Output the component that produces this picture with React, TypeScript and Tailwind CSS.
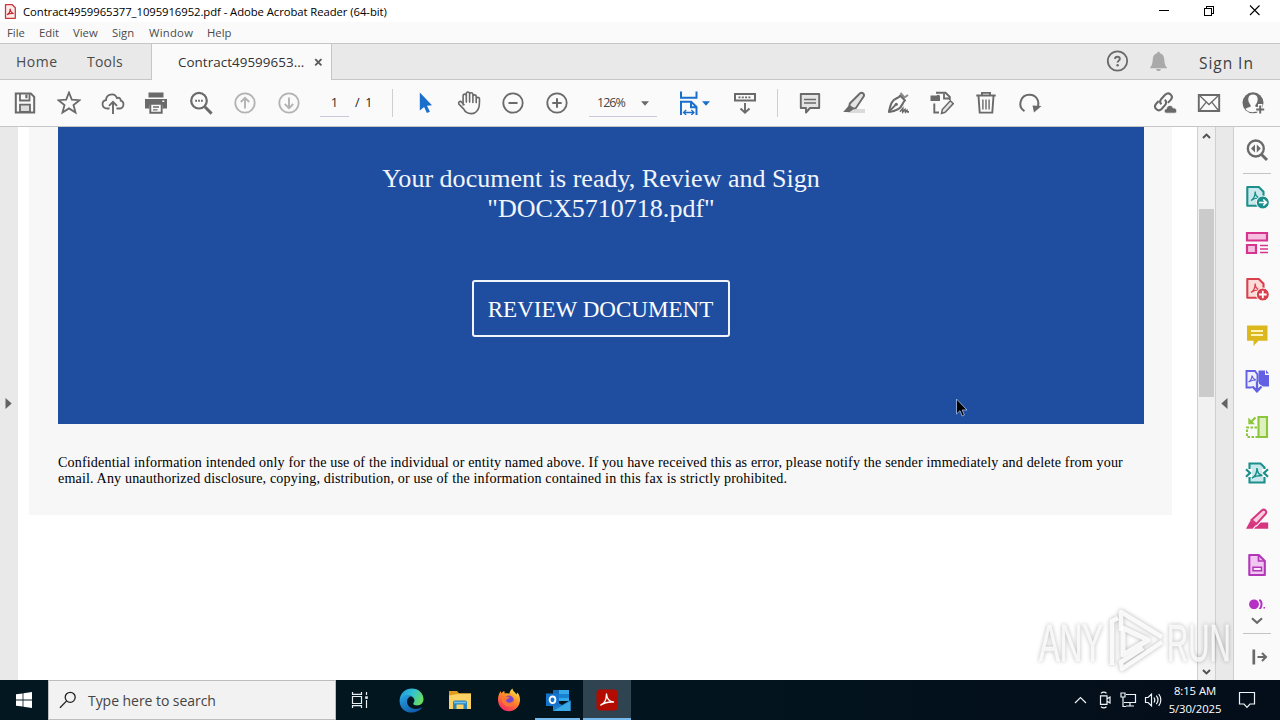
import React from "react";

type IconProps = {
  children: React.ReactNode;
  size?: number;
  color?: string;
  sw?: number;
};

function Icon({ children, size = 24, color = "#6a6a6a", sw = 1.8 }: IconProps) {
  return (
    <svg
      width={size}
      height={size}
      viewBox={`0 0 ${size} ${size}`}
      fill="none"
      stroke={color}
      strokeWidth={sw}
      className="block shrink-0"
    >
      {children}
    </svg>
  );
}

function Cell({ children }: { children: React.ReactNode }) {
  return <div className="flex w-11 shrink-0 items-center justify-center">{children}</div>;
}

const ui = "font-['Open_Sans','Noto_Sans',sans-serif]";
const serif = "font-['Liberation_Serif',serif]";

function TitleBar() {
  return (
    <div className="flex h-[22px] items-center bg-white">
      <div className="ml-1 w-[19px]">
        <svg width="12" height="15" viewBox="0 0 12 15" className="block">
          <path d="M1.500.7h6.800l3 3v10.600H1.500z" fill="#fdeceb" stroke="#c9373c" strokeWidth="1.300" strokeLinejoin="round" />
          <path d="M3 10.800c2-1 3.200-3.300 3.200-6 .2 3 1.300 4.300 3.500 4.700-2.400-.3-4.700 0-6.700 1.300z" fill="none" stroke="#c9242b" strokeWidth="1.200" />
        </svg>
      </div>
      <span className="pt-px text-[11.3px] leading-[22px] tracking-[-0.065px] text-black">
        Contract4959965377_1095916952.pdf - Adobe Acrobat Reader (64-bit)
      </span>
      <div className="ml-auto flex items-center pr-[5px]">
        <svg width="116" height="22" viewBox="0 0 116 22" fill="none" stroke="#000" className="block" shapeRendering="crispEdges">
          <path d="M0 10.500h10" />
          <path d="M45.500 8.500h7v7h-7zM47.500 8v-1.500h7v7H53" />
          <path d="M91 5.500l9.500 9.500M100.500 5.500L91 15" shapeRendering="auto" strokeWidth="1.100" />
        </svg>
      </div>
    </div>
  );
}

function MenuBar() {
  return (
    <div className="flex h-[21px] items-center bg-[#fafafa] text-[11.3px] leading-[21px] text-[#4b4b4b]">
      <span className="ml-[7px] w-8">File</span>
      <span className="w-[34px]">Edit</span>
      <span className="w-[39px]">View</span>
      <span className="w-[37px]">Sign</span>
      <span className="w-[58px] tracking-[0.25px]">Window</span>
      <span>Help</span>
    </div>
  );
}

function TabBar() {
  return (
    <div className="flex h-[37px] items-stretch border-y border-[#c6c6c6] bg-[#e9e9e9] text-[#4b4b4b]">
      <div className="flex w-[151px] items-center text-[14px] tracking-[0.500px]">
        <span className="ml-4 w-[71px]">Home</span>
        <span className="tracking-[0.200px]">Tools</span>
      </div>
      <div className="-mb-px flex w-[181px] items-center border-x border-[#c6c6c6] bg-[#fafafa]">
        <span className="ml-[26px] w-[136px] text-[13.400px] tracking-[0.050px] text-[#333]">Contract49599653...</span>
        <svg width="9" height="9" viewBox="0 0 9 9" className="block">
          <path d="M1.200 1.200l6.200 6.200M7.400 1.200L1.200 7.400" stroke="#5c5c5c" strokeWidth="1.900" />
        </svg>
      </div>
      <div className="ml-auto flex items-center pb-px">
        <Icon>
          <circle cx="12.500" cy="12" r="9.700" strokeWidth="1.800" />
          <path d="M10.100 9.900c0-2.900 4.700-2.900 4.700 0 0 1.700-2.200 1.800-2.200 3.700" strokeWidth="1.900" />
          <circle cx="12.600" cy="16.300" r="1.200" fill="#6a6a6a" stroke="none" />
        </Icon>
        <div className="ml-[17px]">
          <Icon>
            <g fill="#a9a9a9" stroke="none" transform="translate(.5 0)">
              <path d="M12 2.800c1 0 1.400.7 1.400 1.500 2.800.7 4.100 3 4.300 5.700.3 4.200.7 6.600 2.700 8.500v.8H3.600v-.8c2-1.900 2.400-4.300 2.700-8.500.2-2.700 1.500-5 4.300-5.700 0-.8.4-1.500 1.400-1.500z" />
              <path d="M9.500 20h5c-.4 1.500-1.300 2-2.500 2s-2.100-.5-2.500-2z" />
            </g>
          </Icon>
        </div>
        <span className="ml-[29px] w-[81px] pt-[3px] text-[15.500px] leading-5 tracking-[0.950px] text-[#3f3f3f]">Sign In</span>
      </div>
    </div>
  );
}

function Caret({ color = "#6a6a6a" }: { color?: string }) {
  return (
    <svg width="8" height="5" viewBox="0 0 8 5" className="block shrink-0">
      <path d="M0 .3h8L4 4.800z" fill={color} />
    </svg>
  );
}

function Toolbar() {
  return (
    <div className="flex h-[47px] items-center border-b border-[#c6c6c6] bg-[#fafafa] pl-[3px]">
      <Cell>
        <Icon>
          <path d="M2.800 2.500h15l3.400 3.300v15.700H2.800z" strokeWidth="2" />
          <path d="M7 2.500v7h9.500v-7" />
          <path d="M12.300 3.500h2.200v3.700h-2.200z" fill="#6a6a6a" stroke="none" />
          <path d="M7 21v-7.300h10V21z" fill="#dcdcdc" />
        </Icon>
      </Cell>
      <Cell>
        <Icon>
          <path d="M12 1.500l2.800 7.200 7.700.5-6 4.800 2 7.600-6.500-4.200L5.500 21.600l2-7.600-6-4.800 7.700-.5z" />
        </Icon>
      </Cell>
      <Cell>
        <Icon>
          <path d="M8.500 17.500H6.300c-6-.2-6.200-7.600-1.200-8.400C5 3.200 13.500 1 16 7.100c2.200-1.100 4 .7 3.700 2.500 4.300 1.500 3.300 7.900-1.300 7.900h-2.900" />
          <path d="M12 23V11.500M8 14.800l4-4 4 4" strokeWidth="1.900" />
        </Icon>
      </Cell>
      <Cell>
        <Icon>
          <g transform="translate(-1 0)">
            <path d="M1 8h22v9.500h-4.500V13.500h-13v4H1z" fill="#6a6a6a" stroke="none" />
            <path d="M4.500 1.500h15V6.500h-15z" fill="#6a6a6a" stroke="none" />
            <path d="M6.300 12.800h11.400v9H6.300z" fill="#fafafa" strokeWidth="1.900" />
            <path d="M9 16h6M9 18.800h4.500" strokeWidth="1.300" />
            <path d="M18.300 9.500h2v1.500h-2z" fill="#fafafa" stroke="none" />
          </g>
        </Icon>
      </Cell>
      <Cell>
        <Icon>
          <circle cx="10" cy="9.700" r="7.800" strokeWidth="2.200" />
          <path d="M15.800 15.800l6.800 6.800" strokeWidth="3" />
          <path d="M6.200 9.700h1.800M9.100 9.700h1.800M12 9.700h1.800" strokeWidth="2" />
        </Icon>
      </Cell>
      <Cell>
        <Icon color="#b3b3b3">
          <circle cx="12" cy="12" r="9.700" />
          <path d="M12 17.500V7M7.800 11L12 6.800l4.200 4.200" strokeWidth="1.900" />
        </Icon>
      </Cell>
      <Cell>
        <Icon color="#b3b3b3">
          <circle cx="12" cy="12" r="9.700" />
          <path d="M12 6.500V17M7.800 13l4.200 4.200 4.200-4.200" strokeWidth="1.900" />
        </Icon>
      </Cell>
      <div className="ml-[9px] mt-[1px] flex h-[27px] w-[29px] items-center justify-center border-b border-[#c9c9de] text-[13px] text-[#333]">1</div>
      <span className="ml-1.5 w-[37px] text-[12.500px] tracking-[-0.300px] text-[#222]">/&nbsp; 1</span>
      <div className="h-7 w-px bg-[#cfcfcf]" />
      <div className="w-[10px]" />
      <Cell>
        <Icon>
          <path d="M6.800 1.500L19 14.200l-5 .6 2.900 6-3 1.300-2.800-6-4.300 3.300z" fill="#1a6fcc" stroke="none" />
        </Icon>
      </Cell>
      <Cell>
        <Icon>
          <path
            d="M5.900 14.800V5.300c0-2.400 3.200-2.400 3.200 0v6.200V3.300c0-2.500 3.300-2.500 3.300 0v8.200V3.900c0-2.400 3.300-2.400 3.300 0v8V6c0-2.300 3.300-2.300 3.300 0v6V8.500c0-2.300 3.300-2.300 3.300 0 0 4 .1 7.200-1.100 9.500-1.500 3.500-4.100 5-7.300 5-4 0-6-1.600-7.500-4.700L1.700 13.500c-1-2 1.300-3.600 2.800-1.900l2.700 3.100"
            transform="translate(.2 -.4)"
            strokeLinejoin="round"
            strokeWidth="1.600"
          />
        </Icon>
      </Cell>
      <Cell>
        <Icon>
          <circle cx="12" cy="12" r="9.700" />
          <path d="M7.500 12h9" strokeWidth="2" />
        </Icon>
      </Cell>
      <Cell>
        <Icon>
          <circle cx="12" cy="12" r="9.700" />
          <path d="M7.300 12h9.400M12 7.300v9.400" strokeWidth="2" />
        </Icon>
      </Cell>
      <div className="ml-[10px] mt-[1px] flex h-[27px] w-[68px] items-center border-b border-[#c9c9de]">
        <span className="ml-2 w-11 text-[12.500px] tracking-[-1px] text-[#444]">126%</span>
        <Caret />
      </div>
      <div className="ml-[22px] flex items-center gap-px">
        <Icon color="#1a6fcc">
          <path d="M2 .5v6.300h15.500V.5" strokeWidth="2" />
          <path d="M2 24V10.800h10.200l5.300 5.200V24M12 11v5.200h5" strokeWidth="2" />
          <path d="M5 21.500h9.500M7.200 19L4.500 21.500 7.200 24M12.300 19l2.700 2.500-2.700 2.500" strokeWidth="1.300" />
        </Icon>
        <div className="-ml-[2px]">
          <Caret color="#1a6fcc" />
        </div>
      </div>
      <div className="ml-[23px] w-11">
        <Icon>
          <path d="M2 3h20v6.500H2z" strokeWidth="2" />
          <path d="M5.500 6.300h2M8.800 6.300h2M12.100 6.300h2M15.400 6.300h2" strokeWidth="1.800" />
          <path d="M12 12v9.500M7.500 17.500l4.500 4.300 4.500-4.300" strokeWidth="1.900" />
        </Icon>
      </div>
      <div className="h-7 w-px bg-[#cfcfcf]" />
      <div className="w-[10px]" />
      <Cell>
        <Icon>
          <path d="M2.800 3h18.400v14H12l-4 4.500V17H2.800z" fill="#e4e4e4" strokeLinejoin="round" strokeWidth="1.900" />
          <path d="M6 8.500h12M6 12h12" strokeWidth="1.500" />
        </Icon>
      </Cell>
      <Cell>
        <Icon>
          <path d="M9 18h14v4H5z" fill="#dadada" stroke="none" />
          <path d="M7.800 12.500l10-10c2.500-2 5.500.8 3.500 3.500l-7.500 11.200-3.300.3-3.200-2.300z" fill="#e4e4e4" strokeWidth="1.900" />
          <path d="M7.500 13.800l4.800 3.700-4.600 3.600H1.200z" fill="#6a6a6a" stroke="none" />
        </Icon>
      </Cell>
      <Cell>
        <Icon>
          <path d="M14.500 2l4 4.500 3.500-2.500" strokeWidth="1.900" stroke="#8a8a8a" />
          <path d="M14.200 4.500c-.5 1.500-1.500 2-3.500 2.800-4.500 2-6 4.700-7.700 13.700 7.500-1 11.500-3.300 13.300-7.500.7-1.700 1.200-3 2.700-4z" strokeWidth="2.100" strokeLinejoin="round" />
          <path d="M3 20.700l6.500-6.700" />
          <circle cx="10.300" cy="13.300" r="1.600" fill="#6a6a6a" stroke="none" />
          <path d="M14 20.700l2.800-3.200v3.500l2.200-2.500.5 2.500 1.500-1.600.5 1.500H23" strokeWidth="1.600" />
        </Icon>
      </Cell>
      <Cell>
        <Icon>
          <path d="M6 1.800h9.500l4.300 4.200v3M4.300 12.500v9H9" strokeWidth="1.900" />
          <path d="M.5 4.500h6c2-1.300 3.500-.5 3.500 1.500v4H.5z" fill="#6a6a6a" stroke="none" />
          <path d="M14 2.500v5h5.500" />
          <path d="M11.500 22.500l.8-4 8-8.700 3 2.800-8.200 8.700z" fill="#e4e4e4" strokeWidth="1.500" />
        </Icon>
      </Cell>
      <Cell>
        <Icon>
          <path d="M2.300 4.500h19.400M8 4.300V1.900h8v2.400" strokeWidth="1.900" />
          <path d="M4.500 5l1.200 16.600h12.600L19.500 5" strokeWidth="1.900" />
          <path d="M8.900 8.500v10M12 8.500v10M15.100 8.500v10" strokeWidth="1.400" />
        </Icon>
      </Cell>
      <Cell>
        <Icon>
          <path d="M6.500 20.200C-1 15.500 2.500 3.700 11.300 3.700c8 0 11 7.800 7.700 14" strokeWidth="2" />
          <path d="M23.500 15l-7.500 6.500-1.500-7z" fill="#6a6a6a" stroke="none" />
        </Icon>
      </Cell>
      <div className="ml-auto flex pr-[5px]">
        <Cell>
          <Icon>
            <g transform="translate(-.5 0)" strokeWidth="2.100">
              <path d="M9 13.200c-1.800-1.600-1.700-3.500-.2-5.200l3.800-4.300c3.900-3.600 9 1.200 5.600 5.200l-2.800 3" />
              <path d="M12.300 8.800c1.800 1.600 1.700 3.700.2 5.300l-3.400 3.800C5.400 21.500.3 16.600 3.700 12.700L6.200 10" />
            </g>
            <path d="M13.500 22.200c-3-.2-3-4.200 0-4.500.4-4 5.800-4.200 6.500-.8 4 -.6 5 5 1.800 5.300z" fill="#6a6a6a" stroke="#fafafa" strokeWidth="0.800" />
          </Icon>
        </Cell>
        <Cell>
          <Icon>
            <path d="M1.800 4h20.400v16H1.800z" strokeWidth="1.900" />
            <path d="M2.500 4.500l9.500 9 9.500-9M2.500 19.500l6.700-8.300M21.500 19.500l-6.700-8.300" strokeWidth="1.300" />
          </Icon>
        </Cell>
        <Cell>
          <Icon>
            <circle cx="12" cy="11.800" r="10.500" fill="#6a6a6a" stroke="none" />
            <path d="M12 3.500c-4.700 0-5.500 4.500-4 8 .6 1.500 2 2.400 1.800 4-1 .8-4 1-5.300 2.500 3.300 4.300 10 4.300 13 .5v-2c-1-.5-3-.5-3.300-1.300-.2-1.300 1.200-2.200 1.800-3.700 1.500-3.500.7-8-4-8z" fill="#fafafa" stroke="none" />
            <path d="M19.200 13v10M14.500 18.500h10" stroke="#fafafa" strokeWidth="4.500" />
            <path d="M19.200 14.500v8M15.200 18.500h8" strokeWidth="2" />
          </Icon>
        </Cell>
      </div>
    </div>
  );
}

function Triangle({ dir }: { dir: "left" | "right" }) {
  return (
    <svg width="7" height="11" viewBox="0 0 7 11" className="mr-px block">
      <path d={dir === "left" ? "M6.500 0v11L.3 5.500z" : "M.5 0v11l6.200-5.500z"} fill="#636363" />
    </svg>
  );
}

function DocumentView() {
  return (
    <div className={`flex w-[1179px] flex-col bg-white pl-[11px] ${serif}`}>
      <div className="h-[388px] w-[1143px] bg-[#f7f7f7] pl-[29px] pr-7">
        <div className="flex h-[297px] flex-col items-center bg-[#1f4ea1] text-[#f1f5fb]">
          <p className="mt-[37px] text-center text-[26.050px] leading-[30px]">
            Your document is ready, Review and Sign
            <br />
            "DOCX5710718.pdf"
          </p>
          <div className="mt-14 flex h-[57px] w-[258px] justify-center rounded-[3px] border-2 border-[#f1f5fb] pr-px pt-[13px] text-[23.050px] leading-[28px] text-white">
            REVIEW DOCUMENT
          </div>
        </div>
        <p className="mt-[30px] whitespace-nowrap text-[14.100px] leading-4 tracking-[0.147px] text-black">
          Confidential information intended only for the use of the individual or entity named above. If you have received this as error, please notify the sender immediately and delete from your
          <br />
          email. Any unauthorized disclosure, copying, distribution, or use of the information contained in this fax is strictly prohibited.
        </p>
      </div>
    </div>
  );
}

function Scrollbar() {
  return (
    <div className="flex w-[19px] flex-col items-center border-x border-[#cfcfcf] bg-[#f1f1f1]">
      <svg width="9" height="6" viewBox="0 0 9 6" className="mt-[6px] block shrink-0">
        <path d="M1 5l3.500-3.500L8 5" fill="none" stroke="#505050" strokeWidth="1.900" />
      </svg>
      <div className="mt-[70px] h-[188px] w-[15px] shrink-0 bg-[#cbcbcb]" />
      <svg width="9" height="6" viewBox="0 0 9 6" className="mb-[5px] mt-auto block shrink-0">
        <path d="M1 1l3.500 3.500L8 1" fill="none" stroke="#505050" strokeWidth="1.900" />
      </svg>
    </div>
  );
}

function ToolCell({ children }: { children: React.ReactNode }) {
  return <div className="flex h-[46px] shrink-0 items-center justify-center">{children}</div>;
}

const acro = "M6 15.500c2.700-1.500 4.200-4.800 4.200-9 0 3.500 2 6 5 6.500-3.400-.2-6.500.5-9.200 2.500z";

function ToolsPane() {
  return (
    <div className="flex w-[47px] flex-col border-l border-[#cfcfcf] bg-[#fafafa]">
      <div className="flex h-[46px] shrink-0 items-center justify-center">
        <Icon>
          <circle cx="10.800" cy="10.500" r="8" strokeWidth="2.300" />
          <path d="M16.500 16.500l5.500 5.500" strokeWidth="3" />
          <path d="M10 6.500v8L6 10.500zM11.800 6.500v8l4-4z" fill="#6a6a6a" stroke="none" />
        </Icon>
      </div>
      <div className="mx-auto h-px w-7 shrink-0 bg-[#c4c4c4]" />
      <ToolCell>
        <Icon color="#1b8f8b">
          <path d="M2.300 2h11.500l4.700 4.700v14H2.300z" fill="#cbe9ec" strokeWidth="2.100" strokeLinejoin="round" />
          <path d={acro} strokeWidth="1.300" />
          <circle cx="17.800" cy="17.500" r="6.500" fill="#1b8f8b" stroke="#fafafa" strokeWidth="1" />
          <path d="M14 17.500h7M18.300 14.500l3 3-3 3" stroke="#fff" strokeWidth="1.700" />
        </Icon>
      </ToolCell>
      <ToolCell>
        <Icon color="#d6358f">
          <path d="M2 2h20v7.500H2zM2 14h9v8H2z" fill="#f6bfe0" strokeWidth="2.200" />
          <path d="M15 14.500h8M15 18h8M15 21.500h8" strokeWidth="1.300" />
        </Icon>
      </ToolCell>
      <ToolCell>
        <Icon color="#d9404d">
          <path d="M2.300 2h11.500l4.700 4.700v14H2.300z" fill="#fbdcd8" strokeWidth="2.100" strokeLinejoin="round" />
          <path d={acro} strokeWidth="1.300" />
          <circle cx="17.800" cy="17.500" r="6.500" fill="#d9404d" stroke="#fafafa" strokeWidth="1" />
          <path d="M14 17.500h7.600M17.800 13.700v7.600" stroke="#fff" strokeWidth="1.800" />
        </Icon>
      </ToolCell>
      <ToolCell>
        <Icon>
          <path d="M2 2.500h20.500v15.300h-9L8.500 23v-5.200H2z" fill="#dcb81f" stroke="none" />
          <path d="M6 8h12M6 12h12" stroke="#fff3b8" strokeWidth="1.800" />
        </Icon>
      </ToolCell>
      <ToolCell>
        <Icon color="#6360e3">
          <path d="M8 18.500H1.500V2h8.500l2.500 3.500v8" strokeWidth="1.900" fill="#eeeefc" />
          <path d="M3.500 13c2.500-1.500 3.500-3.500 3.500-6.500.5 2.500 2 4 4 4.500-2.500 0-5 .5-7.500 2z" strokeWidth="1.200" />
          <path d="M13.500 1.500H20V6h4v11.500h-6l-4.500-3z" fill="#6360e3" stroke="none" />
          <path d="M21 1l3 3.500h-3z" fill="#6360e3" stroke="none" />
          <path d="M12 13v8M7.800 18l4.200 4.500 4.200-4.500" strokeWidth="4" stroke="#fafafa" />
          <path d="M12 12.500v9M7.500 17.500l4.500 4.800 4.500-4.800" strokeWidth="2.400" />
        </Icon>
      </ToolCell>
      <ToolCell>
        <Icon color="#8cc63c">
          <path d="M13.500 2H22v20h-8.500z" fill="#def0c0" strokeWidth="2.100" />
          <path d="M13 22H2v-9.500h11" strokeWidth="2.100" strokeDasharray="2.500 1.500" />
          <path d="M3.300 2.500v6.700h6.700z" fill="#8cc63c" stroke="none" />
          <path d="M5 8l5.500-5.500" strokeWidth="2.200" />
        </Icon>
      </ToolCell>
      <ToolCell>
        <Icon color="#1b8f8b">
          <path d="M7 5h10v14H7z" fill="#cbe9ec" stroke="none" />
          <path d="M4.500 8V2.500h11L19.500 6.500V8M4.500 16v5.500h15V16" fill="#cbe9ec" strokeWidth="2.100" />
          <path d="M7 17c3-1.500 5-5 5-10 .2 4.500 2.500 7 5.500 7.500-4 0-7.500.5-10.500 2.500z" strokeWidth="1.500" />
          <path d="M1 8.300l4 3.700-4 3.700M23 8.300L19 12l4 3.700" strokeWidth="2.200" />
        </Icon>
      </ToolCell>
      <ToolCell>
        <Icon color="#d6357f">
          <path d="M9 21.800L14.500 15.500h8.700v6.300z" fill="#d6357f" stroke="none" />
          <path d="M6.500 13L17 3.300c2.300-1.800 5.300.7 3.800 3.400L11.500 17z" fill="#f9cfe0" stroke="#fafafa" strokeWidth="4" />
          <path d="M6.500 13L17 3.300c2.300-1.800 5.300.7 3.800 3.400L11.500 17z" fill="#f9cfe0" strokeWidth="2" />
          <path d="M5.500 13.500l6 4-4 4.300H1z" fill="#d6357f" stroke="none" />
        </Icon>
      </ToolCell>
      <ToolCell>
        <Icon color="#b237b8">
          <path d="M4.300 2h9.500l6 6v14H4.300z" fill="#f0c6f3" strokeWidth="2.100" strokeLinejoin="round" />
          <path d="M13.500 2.500V8h6" strokeWidth="1.700" />
          <path d="M8 14.300h8.500v3.500H8z" strokeWidth="1.500" fill="#fbe9fc" />
        </Icon>
      </ToolCell>
      <div className="flex h-[21px] shrink-0 items-end justify-center pb-0">
        <svg width="18" height="10" viewBox="0 0 18 10" className="block">
          <circle cx="6" cy="5.300" r="4.900" fill="#b52fc4" />
          <path d="M11.300.8c3 1.600 3 7.300 0 9.200" fill="none" stroke="#b52fc4" strokeWidth="2" />
          <path d="M15.500 8h1.500v1.500h-1.500z" fill="#b52fc4" />
        </svg>
      </div>
      <div className="flex h-[24px] shrink-0 items-center justify-center">
        <svg width="12" height="8" viewBox="0 0 12 8" className="block">
          <path d="M1 1.300l5 4.500 5-4.500" fill="none" stroke="#6a6a6a" strokeWidth="2.200" />
        </svg>
      </div>
      <div className="mx-auto h-px w-7 shrink-0 bg-[#c4c4c4]" />
      <div className="flex h-[46px] shrink-0 items-center justify-center pl-1.5">
        <svg width="16" height="16" viewBox="0 0 16 16" className="block" fill="none" stroke="#6a6a6a">
          <path d="M1.800.5v15" strokeWidth="2.700" />
          <path d="M5.500 8H14M10 4l4 4-4 4" strokeWidth="2.100" />
        </svg>
      </div>
    </div>
  );
}

function Watermark() {
  return (
    <div className="pointer-events-none absolute left-[1032px] top-[604px] drop-shadow-[0_0_2px_rgba(0,0,0,0.34)]">
      <svg width="240" height="74" viewBox="0 0 240 74" className="block overflow-visible">
        <g fill="#fff" fillOpacity="0.8" stroke="#fff" strokeOpacity="0.5" strokeWidth="0.800" fontFamily="'Liberation Sans', sans-serif" fontSize="52">
          <text transform="translate(7 57) scale(.6 1)" x="0" y="0">ANY</text>
          <text transform="translate(135 57) scale(.565 1)" x="0" y="0">RUN</text>
        </g>
        <g fill="none" stroke="#fff" strokeOpacity="0.88" strokeWidth="4.500" strokeLinejoin="round">
          <path d="M91 24v27l25-15z" strokeWidth="5" />
          <path d="M80 61V17l6-3" />
          <path d="M89 27V8l41 25" />
          <path d="M130 38L90 65l-1-7 22-14" />
        </g>
      </svg>
    </div>
  );
}

function Taskbar() {
  return (
    <div className="flex h-10 items-stretch bg-gradient-to-r from-[#021720] via-[#02151e] to-[#040d1a]">
      <div className="flex w-12 items-center justify-center">
        <svg width="16" height="16" viewBox="0 0 16 16" fill="#fff" className="block">
          <path d="M0 2.300L6.600 1.400v6.200H0zM7.400 1.300L16 0v7.600H7.400zM0 8.400h6.600v6.200L0 13.700zM7.400 8.400H16V16l-8.600-1.300z" />
        </svg>
      </div>
      <div className="flex w-72 items-center border border-[#bdbdbd] bg-[#f2f2f2]">
        <svg width="18" height="18" viewBox="0 0 18 18" className="ml-[10px] block" fill="none" stroke="#222" strokeWidth="1.300">
          <circle cx="11.200" cy="6.300" r="5" />
          <path d="M7.600 9.900L1 16.800" />
        </svg>
        <span className="ml-[11px] text-[14px] tracking-[-0.050px] text-[#444]">Type here to search</span>
      </div>
      <div className="flex w-12 items-center justify-center">
        <svg width="18" height="16" viewBox="0 0 18 16" className="block" fill="none" stroke="#e8eef0" strokeWidth="1.200">
          <path d="M1.500 4.500h9v7h-9zM1.500 0v2.300h9V0M1.500 16v-2.300h9V16M15.500 0v3M15.500 8v8" />
          <path d="M14.200 4.300h2.600v2.600h-2.600z" fill="#e8eef0" stroke="none" />
        </svg>
      </div>
      <div className="flex w-[53px] items-center justify-center pl-px">
        <svg width="25" height="25" viewBox="0 0 25 25" className="block">
          <defs>
            <linearGradient id="edgeTop" x1="0" x2="1" y1="0.200" y2="0.600">
              <stop offset="0" stopColor="#2099dd" />
              <stop offset="0.500" stopColor="#33c3cf" />
              <stop offset="1" stopColor="#6ade5c" />
            </linearGradient>
            <linearGradient id="edgeBottom" x1="0" x2="0.700" y1="0" y2="1">
              <stop offset="0" stopColor="#2aa5e4" />
              <stop offset="1" stopColor="#0f5aa8" />
            </linearGradient>
          </defs>
          <path d="M.6 12C1.500 4.500 6.500.5 12.700.5c7 0 11.800 5 11.800 10.500 0 4-3 6.400-6.300 6.400-2.700 0-4.200-1-4-2 .2-.7 1.200-1.100 1.200-2.900C15.400 7.500 6 5.500.6 12z" fill="url(#edgeTop)" />
          <path d="M.6 12C3 7 9 5.500 12.800 8c-3.800 1-5.300 4-4.500 7.200 1 4.300 6.200 6.800 11.700 5.200l2.400-1c.5 0 .6.300.3.700C17.500 27.500.2 26.500.6 12z" fill="url(#edgeBottom)" />
          <path d="M8.300 15.200C7 10.500 11 7.500 12.800 8c2 1 3 3 2.600 5 0 1.500-1.500 1.800-1.200 2.700 1 2.300 5.500 2 7 1.200-3 4-11.500 4.500-12.900-1.700z" fill="#021720" opacity="0.350" />
        </svg>
      </div>
      <div className="flex w-11 items-center justify-center pl-[2px]">
        <svg width="22" height="20" viewBox="0 0 22 20" className="block">
          <path d="M0 1h8l2 2.300h12V8H0z" fill="#e09b1d" />
          <path d="M0 5.500L10 3.800h12V19H0z" fill="#fcd265" />
          <path d="M4 19v-6.500c0-1.200.8-2 2-2h10c1.200 0 2 .8 2 2V19h-3.500v-4.500h-7V19z" fill="#2c86be" />
          <path d="M5 12.500h12" stroke="#75c8ec" strokeWidth="1.500" />
        </svg>
      </div>
      <div className="flex w-[54px] items-center justify-center pl-[2px]">
        <svg width="24" height="24" viewBox="0 0 24 24" className="block">
          <defs>
            <linearGradient id="fox" x1="0.800" x2="0.250" y1="0" y2="1">
              <stop offset="0" stopColor="#ffe94a" />
              <stop offset="0.450" stopColor="#ff8a26" />
              <stop offset="1" stopColor="#f52368" />
            </linearGradient>
          </defs>
          <path d="M1 12C.8 8 2.300 5 3.800 3l.4 2.500C5 4.500 6 3.500 7.300 3l.5 2.600c2-.7 3.400-.5 4.600.2C12.500 3.500 14 1.500 15.500.5 15.500 3 18 4 19.500 6.500l.8-2c2 2 2.900 5.300 2.700 8C22.500 19 17.500 23.300 12 23.300 6 23.300 1.200 18.500 1 12z" fill="url(#fox)" />
          <circle cx="12" cy="12.300" r="4.800" fill="#7545d2" />
          <path d="M5 8.500c3-1 5 .5 7.500.3.500 2-3 2-3.500 3.700 1 3 6 3 7.500-.2 1.500 4-2.500 7-6 6-4-.8-6.300-5-5.500-9.800z" fill="#ff7a2e" opacity="0.900" />
        </svg>
      </div>
      <div className="mr-[3px] flex w-[45px] flex-col items-center border-b-2 border-[#76b9ed] pl-0.5 pt-[9px]">
        <svg width="25" height="22" viewBox="0 0 25 22" className="block">
          <path d="M7 1h12v11H7z" fill="#1169b8" />
          <path d="M13 1h10v11H13z" fill="#35a9e8" />
          <path d="M13 5h10v4H13z" fill="#1782cf" />
          <path d="M7 11l9 5 8.500-5V22H7z" fill="#1b7ecb" />
          <path d="M7 22l17.500-10V22z" fill="#3ba9e6" />
          <path d="M0 4.500h13V17H0z" fill="#1373cd" />
          <ellipse cx="6.500" cy="10.800" rx="2.900" ry="3.300" fill="none" stroke="#fff" strokeWidth="1.800" />
        </svg>
      </div>
      <div className="flex w-12 flex-col items-center border-b-2 border-[#76b9ed] bg-[#2f4350] pt-[9px]">
        <svg width="22" height="22" viewBox="0 0 22 22" className="block">
          <rect x="0.500" y="0.500" width="21" height="21" rx="3.500" fill="#b30b00" />
          <path d="M4.800 16c3.500-1.500 5.700-5.500 5.700-11 .3 4.500 2.800 7.500 7 8-4.800-.3-9 .5-12.700 3z" fill="none" stroke="#fff" strokeWidth="1.400" strokeLinejoin="round" />
        </svg>
      </div>
      <div className="ml-auto flex items-center pr-[2px] text-white">
        <svg width="92" height="20" viewBox="0 0 92 20" className="block" fill="none" stroke="#f0f4f6" strokeWidth="1.200">
          <path d="M1 13l5.500-5.500 5.500 5.500" />
          <path d="M26.500 5.800h6.500v8.500h-6.500zM33 8.800l3-1.800v6l-3-1.800M27 3.300c1.500-1.200 4-1.200 5.500 0M27 16.700c1.500 1.200 4 1.200 5.500 0" />
          <path d="M52 4.500h9.500v8H50M56 12.500v3.500M52 16h8M47 3h4v4h-4zM49 7v9.500h3" />
          <path d="M71.500 7.500h2.500l3.500-3.300v11.600L74 12.500h-2.500zM80 7.500c1 1.500 1 3.500 0 5M82.300 5.700c2 2.500 2 6 0 8.500M84.700 4c2.800 3.500 2.800 8.400 0 11.900" />
        </svg>
        <div className="-ml-[3px] mr-px flex w-[66px] flex-col items-center pr-0.5 text-[11.300px] leading-[18px]">
          <span className="tracking-[-0.050px]">8:15 AM</span>
          <span className="tracking-[-0.100px]">5/30/2025</span>
        </div>
        <svg width="48" height="20" viewBox="0 0 48 20" className="block" fill="none" stroke="#f0f4f6" strokeWidth="1.200">
          <path d="M9.500 2.500h15V14h-4.500L17 17.300 14 14H9.500z" />
        </svg>
      </div>
    </div>
  );
}

export default function App() {
  return (
    <div className={`relative flex h-[720px] w-[1280px] flex-col overflow-hidden bg-white ${ui}`}>
      <TitleBar />
      <MenuBar />
      <TabBar />
      <Toolbar />
      <div className="flex h-[553px] items-stretch">
        <div className="flex w-[18px] items-center justify-center bg-[#e9e9e9]">
          <Triangle dir="right" />
        </div>
        <DocumentView />
        <Scrollbar />
        <div className="flex w-[17px] items-center justify-center bg-[#e9e9e9]">
          <Triangle dir="left" />
        </div>
        <ToolsPane />
      </div>
      <Taskbar />
      <Watermark />
      <svg width="13" height="20" viewBox="0 0 13 20" className="absolute left-[956px] top-[398px]">
        <path d="M.5 1v15l3.500-3.300 2.200 5.300 2.200-1-2.200-5h4.800z" fill="#000" stroke="#a9c3ea" strokeWidth="0.800" />
      </svg>
    </div>
  );
}
